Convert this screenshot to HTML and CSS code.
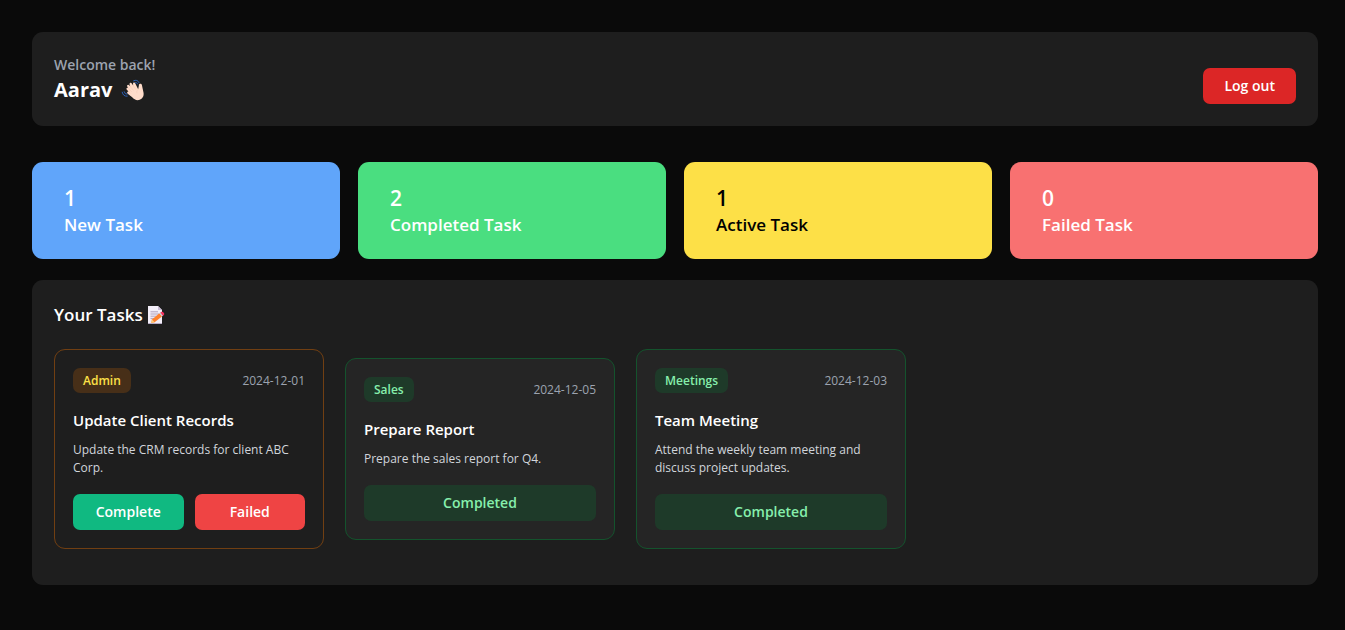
FILE: index.html
```html
<!DOCTYPE html>
<html lang="en">
<head>
  <meta charset="utf-8">
  <meta name="viewport" content="width=device-width, initial-scale=1">
  <title>Employee Dashboard</title>
  <link rel="stylesheet" href="styles.css">
</head>
<body>
  <main class="page">
    <header class="panel header">
      <div>
        <p class="welcome">Welcome back!</p>
        <h1 class="name">Aarav
          <svg class="wave" viewBox="0 0 24 24" role="img" aria-label="waving hand">
            <path d="M12.6 2.8Q16.4 1 18 4.6M14 4.6Q16 3.8 16.7 6M1.2 14.2Q2 18.6 6.2 18.2M3.2 13.8Q3.8 16.4 6 16.2" fill="none" stroke="#2b5fb5" stroke-width="1" stroke-linecap="round"/>
            <path d="M6.2 8.4C5.6 7 7.3 6 8.2 7.2L9.3 8.6 8.6 6.5C8.1 5 9.9 4.2 10.8 5.5L12.2 7.6 12 5.8C11.9 4.4 13.7 4.1 14.3 5.4L17.2 11.3 18 6.8C18.3 5.2 20.7 5.5 20.9 7.1L22.5 14.5C23.2 18.1 21.4 20.8 18.7 21.8C15.8 22.8 13.2 21.6 11.2 19.3L6.7 15.8C5.5 14.8 6.4 13.1 7.8 13.7L5.8 11.7C4.8 10.5 6.1 9.3 7.2 10.1Z" fill="#ffdcca"/>
            <path d="M9.3 8.6L12.2 12.2M12.2 7.6L14.5 11.3M7.2 10.1L10.4 13.6M7.8 13.7L9.2 14.9M17.2 11.3C15.8 12.1 15.4 13.5 15.9 15" fill="none" stroke="#f3c8b5" stroke-width=".5" stroke-linecap="round"/>
          </svg>
        </h1>
      </div>
      <button class="btn btn-logout" type="button">Log out</button>
    </header>

    <section class="stats" aria-label="Task counts">
      <div class="stat stat-new"><p class="count">1</p><p class="label">New Task</p></div>
      <div class="stat stat-completed"><p class="count">2</p><p class="label">Completed Task</p></div>
      <div class="stat stat-active"><p class="count">1</p><p class="label">Active Task</p></div>
      <div class="stat stat-failed"><p class="count">0</p><p class="label">Failed Task</p></div>
    </section>

    <section class="panel tasks">
      <h2 class="heading">Your Tasks
        <svg class="memo" viewBox="0 0 18 20" role="img" aria-label="memo">
          <path d="M1 1H11L15 5V19H1Z" fill="#f3eef8"/>
          <path d="M11 1V5H15Z" fill="#c9bcd6"/>
          <path d="M1 18.5H15" stroke="#b9adc6"/>
          <path d="M3.5 6.8H11M3.5 9H12M3.5 11.2H9.5M3.5 13.4H7" stroke="#a99bb8" stroke-width=".9"/>
          <path d="M5 14.4L12.4 8.3 15 11.4 7.6 17.2 4.2 17.9Z" fill="#ff822d"/>
          <path d="M5 14.4L7.6 17.2 4.2 17.9Z" fill="#ffce7c"/>
          <path d="M12.4 8.3L13.6 7.3 16.2 10.4 15 11.4Z" fill="#c7c7d0"/>
          <path d="M13.3 7.6L14.3 6.9C15.7 6.2 18 8.5 16.9 9.9L15.9 10.7Z" fill="#f8325f"/>
        </svg>
      </h2>
      <div class="cards">
        <article class="card card-active">
          <div class="meta"><span class="badge">Admin</span><time datetime="2024-12-01">2024-12-01</time></div>
          <h3 class="title">Update Client Records</h3>
          <p class="desc">Update the CRM records for client ABC Corp.</p>
          <div class="actions">
            <button class="btn btn-complete" type="button">Complete</button>
            <button class="btn btn-failed" type="button">Failed</button>
          </div>
        </article>
        <article class="card card-done">
          <div class="meta"><span class="badge">Sales</span><time datetime="2024-12-05">2024-12-05</time></div>
          <h3 class="title">Prepare Report</h3>
          <p class="desc">Prepare the sales report for Q4.</p>
          <div class="actions"><button class="btn btn-done" type="button">Completed</button></div>
        </article>
        <article class="card card-done">
          <div class="meta"><span class="badge">Meetings</span><time datetime="2024-12-03">2024-12-03</time></div>
          <h3 class="title">Team Meeting</h3>
          <p class="desc">Attend the weekly team meeting and discuss project updates.</p>
          <div class="actions"><button class="btn btn-done" type="button">Completed</button></div>
        </article>
      </div>
    </section>
  </main>
</body>
</html>
```
FILE: styles.css
```css
* { box-sizing: border-box; margin: 0; }

body {
  background: #0a0a0a;
  color: #fff;
  font-family: "Segoe UI", "Open Sans", "Noto Sans", sans-serif;
  font-size: 14px;
  line-height: 18px;
}

.page { padding: 32px 27px 32px 32px; }

.panel {
  background: #1e1e1e;
  border-radius: 11px;
  padding: 22px;
}

.header {
  display: flex;
  align-items: flex-end;
  justify-content: space-between;
}

.welcome {
  color: #9ca3af;
  font-weight: 600;
  line-height: 22px;
}

.name {
  display: flex;
  align-items: center;
  gap: 9px;
  font-size: 20px;
  font-weight: 700;
  line-height: 28px;
}

.wave { width: 24px; height: 24px; }

.btn {
  height: 36px;
  border: 0;
  border-radius: 7px;
  color: #fff;
  font: inherit;
  font-weight: 600;
  cursor: pointer;
}

.btn-logout { background: #dc2626; padding: 0 21px; }

.stats {
  display: grid;
  grid-template-columns: repeat(4, 1fr);
  gap: 18px;
  margin: 36px 0 21px;
}

.stat {
  border-radius: 11px;
  padding: 22px 32px;
  font-weight: 600;
}

.stat-new { background: #60a5fa; }
.stat-completed { background: #4ade80; }
.stat-active { background: #fde047; color: #000; }
.stat-failed { background: #f87171; }

.count { font-size: 21px; line-height: 28px; }
.label { font-size: 17px; line-height: 25px; }

.tasks { padding-bottom: 36px; }

.heading {
  display: flex;
  align-items: center;
  gap: 4px;
  font-size: 17px;
  font-weight: 600;
  line-height: 25px;
  margin-bottom: 22px;
}

.memo { width: 18px; height: 20px; }

.cards {
  display: flex;
  flex-wrap: wrap;
  align-items: center;
  gap: 21px;
}

.card {
  width: 270px;
  padding: 18px;
  border: 1px solid;
  border-radius: 11px;
}

.card-active { border-color: #713f12; }
.card-done { background: #252525; border-color: #14532d; }

.meta {
  display: flex;
  align-items: center;
  justify-content: space-between;
  color: #9ca3af;
  font-size: 12px;
}

.badge {
  border-radius: 7px;
  padding: 0 10px;
  font-weight: 600;
  line-height: 25px;
}

.card-active .badge { background: #472f18; color: #fde047; }
.card-done .badge,
.btn-done { background: #1e3a29; color: #86efac; }

.title {
  margin: 15px 0 9px;
  font-size: 15px;
  font-weight: 600;
  line-height: 24px;
}

.desc { color: #d1d5db; font-size: 12px; }

.actions {
  display: flex;
  gap: 11px;
  margin-top: 17px;
}

.actions .btn { flex: 1; }
.btn-complete { background: #10b981; }
.btn-failed { background: #ef4444; }
```
